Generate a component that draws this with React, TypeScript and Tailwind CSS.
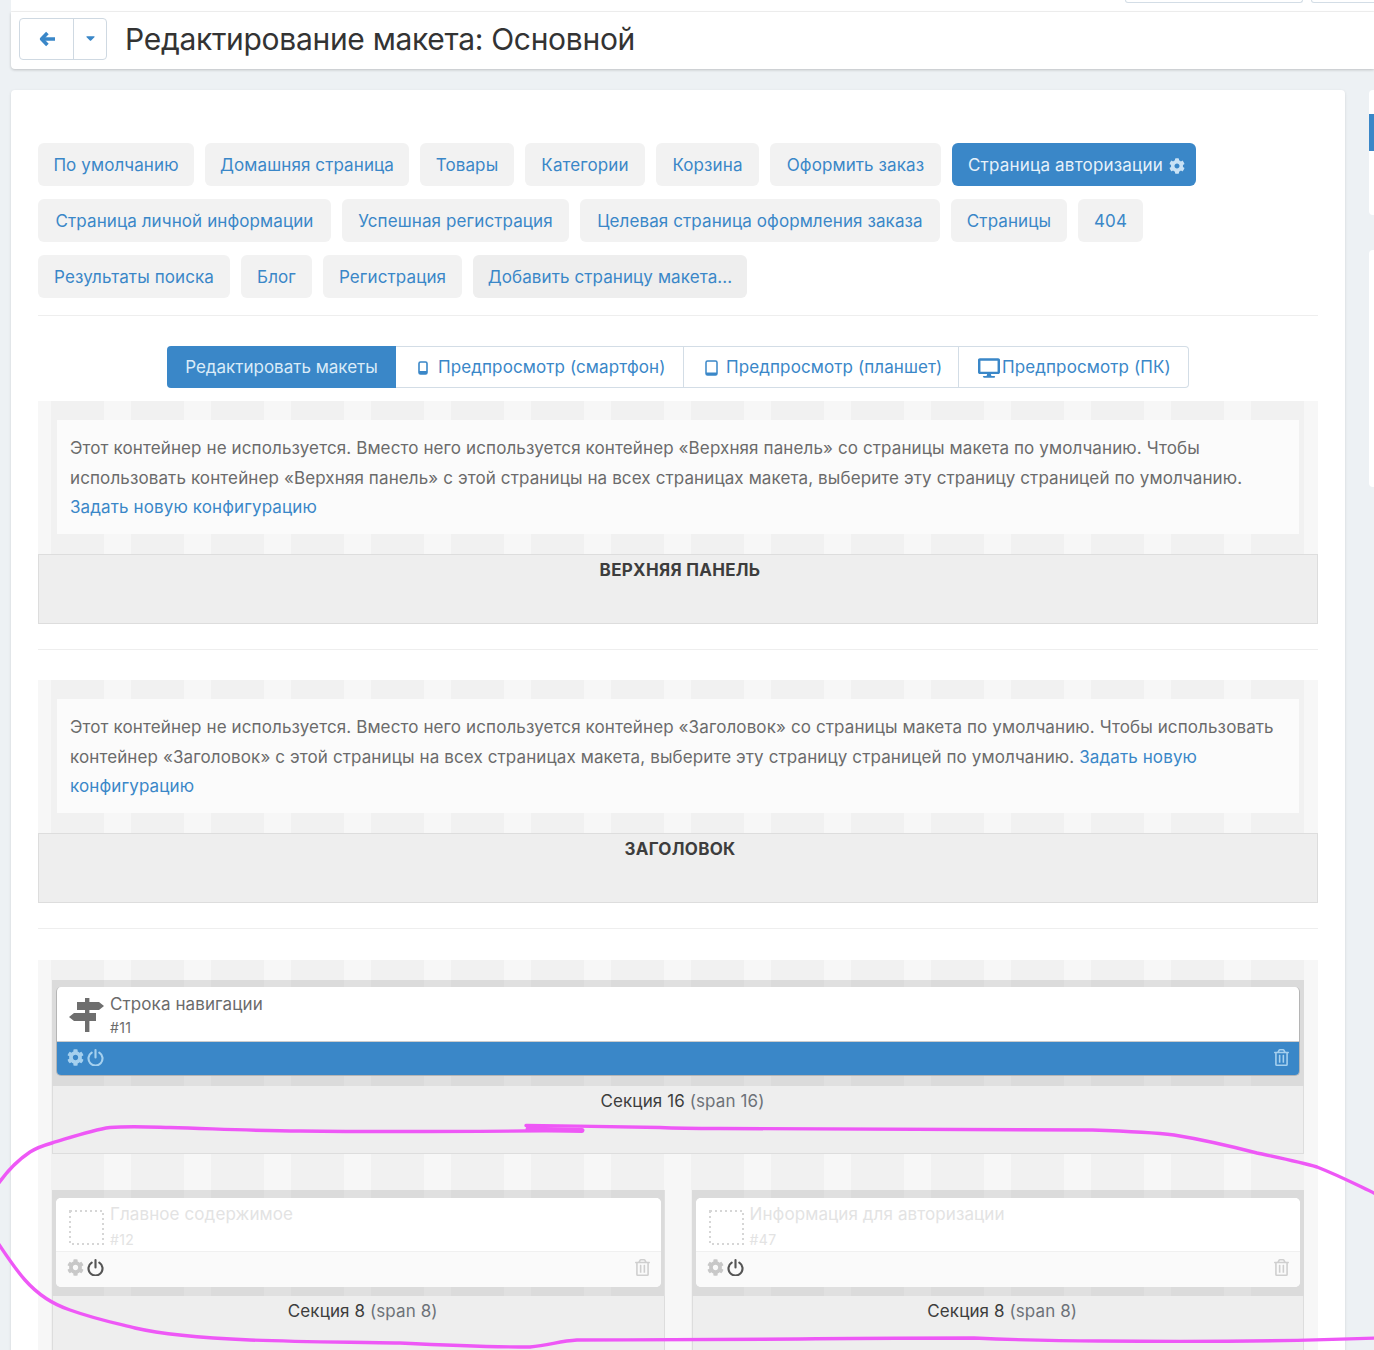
import React from "react";
import { FaCaretDown, FaCog, FaDesktop, FaRegTrashAlt } from "react-icons/fa";

const row1 = [
  ["По умолчанию", "w-[156px]"],
  ["Домашняя страница", "w-[204px]"],
  ["Товары", "w-[94px]"],
  ["Категории", "w-[120px]"],
  ["Корзина", "w-[103px]"],
  ["Оформить заказ", "w-[171px]"],
];
const row2 = [
  ["Страница личной информации", "w-[293px]"],
  ["Успешная регистрация", "w-[227px]"],
  ["Целевая страница оформления заказа", "w-[360px]"],
  ["Страницы", "w-[116px]"],
  ["404", "w-[65px]"],
];
const row3 = [
  ["Результаты поиска", "w-[192px]"],
  ["Блог", "w-[71px]"],
  ["Регистрация", "w-[139px]"],
];

const stripes =
  "bg-[image:repeating-linear-gradient(90deg,#f7f7f7_0,#f7f7f7_13px,#f1f1f1_13px,#f1f1f1_66px,#f7f7f7_66px,#f7f7f7_80px)]";

function Chip({ label, w, dark }: { label: string; w: string; dark?: boolean }) {
  return (
    <a className={`flex h-[43px] items-center justify-center rounded-md pt-[2px] text-[#3a87c8] ${w} ${dark ? "bg-[#eeeeee]" : "bg-[#f2f2f2]"}`}>{label}</a>
  );
}

function Power({ className }: { className: string }) {
  return (
    <svg viewBox="0 0 16 16" className={className} fill="none" stroke="currentColor" strokeWidth="2" strokeLinecap="round">
      <path d="M4.4 3.4a6.6 6.6 0 1 0 7.2 0" />
      <path d="M8 1v7" />
    </svg>
  );
}

function Phone() {
  return (
    <svg viewBox="0 0 10 14" className="h-[14px] w-[10px]" fill="none">
      <rect x="1" y="1" width="8" height="12" rx="1.5" stroke="currentColor" strokeWidth="1.6" />
      <rect x="1" y="10" width="8" height="3" fill="currentColor" />
    </svg>
  );
}

function Tablet() {
  return (
    <svg viewBox="0 0 13 16" className="h-[16px] w-[13px]" fill="none">
      <rect x="1" y="1" width="11" height="14" rx="1.5" stroke="currentColor" strokeWidth="1.5" />
      <rect x="1" y="12.5" width="11" height="2.5" fill="currentColor" />
    </svg>
  );
}

function BackArrow() {
  return (
    <svg viewBox="0 0 16 16" className="h-[16px] w-[16px]" fill="none" stroke="currentColor" strokeWidth="3.6" strokeLinejoin="round">
      <path d="M8.4 2L2.6 8l5.8 6" />
      <path d="M3 8h13" />
    </svg>
  );
}

function SignPost() {
  return (
    <svg viewBox="0 0 35 34" className="h-[34px] w-[35px] text-[#6e6e6e]" fill="currentColor">
      <rect x="16" y="0" width="4.4" height="34" />
      <path d="M8 4h22l5 4-5 4H8z" />
      <path d="M5 15h22v8H5l-5-4z" />
    </svg>
  );
}

function Dotted() {
  return (
    <svg viewBox="0 0 35 35" className="h-[35px] w-[35px]" fill="none" stroke="#d6d6d6" strokeWidth="2">
      <rect x="1" y="1" width="33" height="33" strokeDasharray="2 3" />
    </svg>
  );
}

function Notice({ children }: { children: React.ReactNode }) {
  return (
    <div className="mx-[19px] mt-[19px] h-[114px] bg-[#fbfbfb] px-[13px] pt-[14.4px] text-[17px] leading-[29.4px] tracking-[0.115px] text-[#6b6b6b]">{children}</div>
  );
}

function Container({ title, text }: { title: string; text: React.ReactNode }) {
  return (
    <div className={`${stripes} flex h-[223px] flex-col`}>
      <Notice>{text}</Notice>
      <div className="mt-auto h-[70px] border border-[#dddddd] bg-[#eeeeee] pl-[4px] pt-[3px] text-center text-[17px] font-bold leading-[24px] tracking-[0.3px] text-[#3d3d3d]">{title}</div>
    </div>
  );
}

function Module({ title, id, active, icon }: { title: string; id: string; active?: boolean; icon: React.ReactNode }) {
  return (
    <div className={`bg-black/[.09] px-[4px] ${active ? "pb-[10px] pt-[7px]" : "pb-[9px] pt-[8px]"}`}>
      <div className={`h-[89px] overflow-hidden rounded-[5px] ${active ? "border border-t-0 border-[#b5b5b5]" : "bg-white"}`}>
        <div className={`flex bg-white ${active ? "h-[55px] border-b border-[#cccccc]" : "h-[54px] border-b border-[#f0f0f0]"}`}>
          <div className={`flex shrink-0 items-center ${active ? "w-[53px] pl-[12px] pt-[2px]" : "w-[54px] pl-[13px] pt-[5px]"}`}>{icon}</div>
          <div className={active ? "pt-[5px]" : "pt-[4px]"}>
            <div className={`text-[17px] leading-[24px] ${active ? "text-[#6b6b6b]" : "text-[#e3e3e3]"}`}>{title}</div>
            <div className={`text-[14px] leading-[20px] tracking-[0.4px] ${active ? "mt-[2px] text-[#6b6b6b]" : "mt-[4px] text-[#e3e3e3]"}`}>{id}</div>
          </div>
        </div>
        <div className={`flex items-center ${active ? "h-[34px] border-b border-white bg-[#3a87c8] pb-[3px] pl-[10px] pr-[10px]" : "h-[35px] bg-[#fafafa] pb-[4px] pl-[11px] pr-[11px]"}`}>
          <FaCog className={`h-[17px] w-[17px] ${active ? "text-[#a5d0ee]" : "text-[#c8c8c8]"}`} />
          <Power className={`ml-[3px] h-[17px] w-[17px] ${active ? "text-[#a5d0ee]" : "text-[#555555]"}`} />
          <FaRegTrashAlt className={`ml-auto h-[17px] w-[15px] ${active ? "text-[#a5d0ee]" : "text-[#cfcfcf]"}`} />
        </div>
      </div>
    </div>
  );
}

function Section({ n, h }: { n: number; h: string }) {
  return (
    <div className={`${h} border-x border-b border-[#dddddd] bg-[#eeeeee] pl-[9px] pt-[3px] text-center text-[17px] leading-[24px] text-[#3d3d3d]`}>
      Секция {n} <span className="text-[#6d7278]">(span {n})</span>
    </div>
  );
}

const linkCls = "text-[#3a87c8]";

export default function App() {
  return (
    <div
      className="relative h-[1350px] overflow-hidden bg-[#edf1f4] text-[17px] tracking-[0.1px] text-[#333333]"
      style={{ fontFamily: "Inter, 'Noto Sans', sans-serif" }}
    >
      <div className="ml-[11px] flex h-[12px] items-start gap-[8px] border-b border-[#f3f3f3] bg-white pl-[1114px]">
        <div className="h-[3px] w-[178px] shrink-0 rounded-b-[4px] border-x border-b border-[#d3dde6]" />
        <div className="h-[3px] w-[80px] shrink-0 rounded-b-[4px] border-x border-b border-[#d3dde6]" />
      </div>
      <div className="ml-[11px] flex h-[57px] items-start rounded-bl-[4px] bg-white pl-[8px] pt-[6px] shadow-[0_1px_3px_rgba(0,0,0,0.2)]">
        <div className="flex h-[42px] w-[88px] overflow-hidden rounded-[4px] border border-[#cfd9e2] text-[#3a87c8]">
          <div className="flex w-[54px] items-center justify-center border-r border-[#cfd9e2]">
            <BackArrow />
          </div>
          <div className="flex flex-1 items-center justify-center pb-[3px]">
            <FaCaretDown className="h-[14px] w-[11px]" />
          </div>
        </div>
        <h1 className="ml-[18px] text-[30px] font-normal leading-[42px] tracking-[-0.3px] text-[#333333]">Редактирование макета: Основной</h1>
      </div>

      <div className="mt-[21px] flex items-start">
        <div className="ml-[11px] h-[1400px] w-[1334px] shrink-0 rounded-[4px] bg-white px-[27px] pt-[53px] shadow-[0_1px_3px_rgba(0,0,0,0.12)]">
          <div className="flex flex-col gap-[13px]">
            <div className="flex gap-[11px]">
              {row1.map(([l, w]) => (
                <Chip key={l} label={l} w={w} />
              ))}
              <a className="flex h-[43px] w-[244px] items-center gap-[6px] rounded-md bg-[#3a87c8] pl-[16px] pt-[2px] tracking-[0.2px] text-[#e6f1fa]">
                Страница авторизации
                <FaCog className="h-[16px] w-[16px] shrink-0 text-[#c9e2f5]" />
              </a>
            </div>
            <div className="flex gap-[11px]">
              {row2.map(([l, w]) => (
                <Chip key={l} label={l} w={w} />
              ))}
            </div>
            <div className="flex gap-[11px]">
              {row3.map(([l, w]) => (
                <Chip key={l} label={l} w={w} />
              ))}
              <Chip label="Добавить страницу макета..." w="w-[274px]" dark />
            </div>
          </div>

          <hr className="mt-[17px] border-[#eeeeee]" />

          <div className="mt-[30px] flex justify-center text-[#3a87c8]">
            <div className="flex h-[42px] w-[229px] items-center justify-center rounded-l-[4px] bg-[#3a87c8] pt-[2px] tracking-[0px] text-[#d9ebf8]">Редактировать макеты</div>
            <div className="flex h-[42px] w-[288px] items-center gap-[10px] border-y border-r border-[#d3dde6] pl-[22px] pt-[2px]">
              <Phone />
              Предпросмотр (смартфон)
            </div>
            <div className="flex h-[42px] w-[275px] items-center gap-[8px] border-y border-r border-[#d3dde6] pl-[21px] pt-[2px]">
              <Tablet />
              Предпросмотр (планшет)
            </div>
            <div className="flex h-[42px] w-[230px] items-center gap-[2px] rounded-r-[4px] border-y border-r border-[#d3dde6] pl-[19px] pt-[2px]">
              <FaDesktop className="h-[20px] w-[22px]" />
              Предпросмотр (ПК)
            </div>
          </div>

          <div className="mt-[13px]">
            <Container
              title="ВЕРХНЯЯ ПАНЕЛЬ"
              text={
                <>
                  Этот контейнер не используется. Вместо него используется контейнер «Верхняя панель» со страницы макета по умолчанию. Чтобы использовать контейнер «Верхняя панель» с этой страницы на всех страницах макета, выберите эту страницу страницей по умолчанию. <a className={linkCls}>Задать новую конфигурацию</a>
                </>
              }
            />
          </div>
          <hr className="mt-[25px] border-[#eeeeee]" />
          <div className="mt-[30px]">
            <Container
              title="ЗАГОЛОВОК"
              text={
                <>
                  Этот контейнер не используется. Вместо него используется контейнер «Заголовок» со страницы макета по умолчанию. Чтобы использовать контейнер «Заголовок» с этой страницы на всех страницах макета, выберите эту страницу страницей по умолчанию. <a className={linkCls}>Задать новую конфигурацию</a>
                </>
              }
            />
          </div>
          <hr className="mt-[25px] border-[#eeeeee]" />

          <div className={`${stripes} mt-[31px] h-[500px] px-[14px] pt-[20px]`}>
            <Module active title="Строка навигации" id="#11" icon={<SignPost />} />
            <Section n={16} h="h-[68px]" />
            <div className="mt-[36px] grid grid-cols-2 gap-[27px]">
              <div>
                <Module title="Главное содержимое" id="#12" icon={<Dotted />} />
                <Section n={8} h="h-[100px]" />
              </div>
              <div>
                <Module title="Информация для авторизации" id="#47" icon={<Dotted />} />
                <Section n={8} h="h-[100px]" />
              </div>
            </div>
          </div>
        </div>

        <div className="ml-[24px] flex flex-1 flex-col">
          <div className="h-[125px] rounded-l-[4px] bg-white pt-[24px]">
            <div className="h-[37px] bg-[#3a87c8]" />
          </div>
          <div className="mt-[35px] h-[237px] rounded-l-[4px] bg-white" />
        </div>
      </div>

      <svg className="pointer-events-none absolute left-0 top-0 h-[1350px] w-[1374px]" viewBox="0 0 1374 1350" fill="none" stroke="#ee58f6" strokeWidth="3.4" strokeLinecap="round" strokeLinejoin="round">
        <path d="M-2 1184C8 1170 18 1160 30 1152C38 1147 45 1145 52 1143C72 1137 92 1130 110 1127.5C130 1126 150 1127 170 1127.5C220 1129 260 1131 300 1131C380 1132 480 1131.5 582 1130.5" />
        <path d="M526 1125.5C570 1126 620 1126.5 660 1127.5C680 1128.5 700 1128.5 720 1128.5C850 1129.5 980 1129 1091 1130C1120 1131 1150 1132 1174 1135C1205 1140 1230 1146 1257 1153C1280 1158 1300 1162 1317 1167C1340 1176 1355 1184 1376 1194" />
        <path d="M528 1129L582 1130.5" strokeWidth="5" />
        <path d="M-2 1243C8 1258 16 1270 25 1280C40 1297 55 1305 70 1310C95 1319 115 1323 135 1328C165 1335 205 1338 250 1340C300 1342 350 1342 400 1343C440 1345 490 1347 530 1347C550 1345 560 1341 577 1340C650 1340 720 1339 800 1339C860 1338 920 1338 974 1338C1020 1340 1060 1341 1100 1341C1200 1342 1300 1341 1376 1338" />
      </svg>
    </div>
  );
}
